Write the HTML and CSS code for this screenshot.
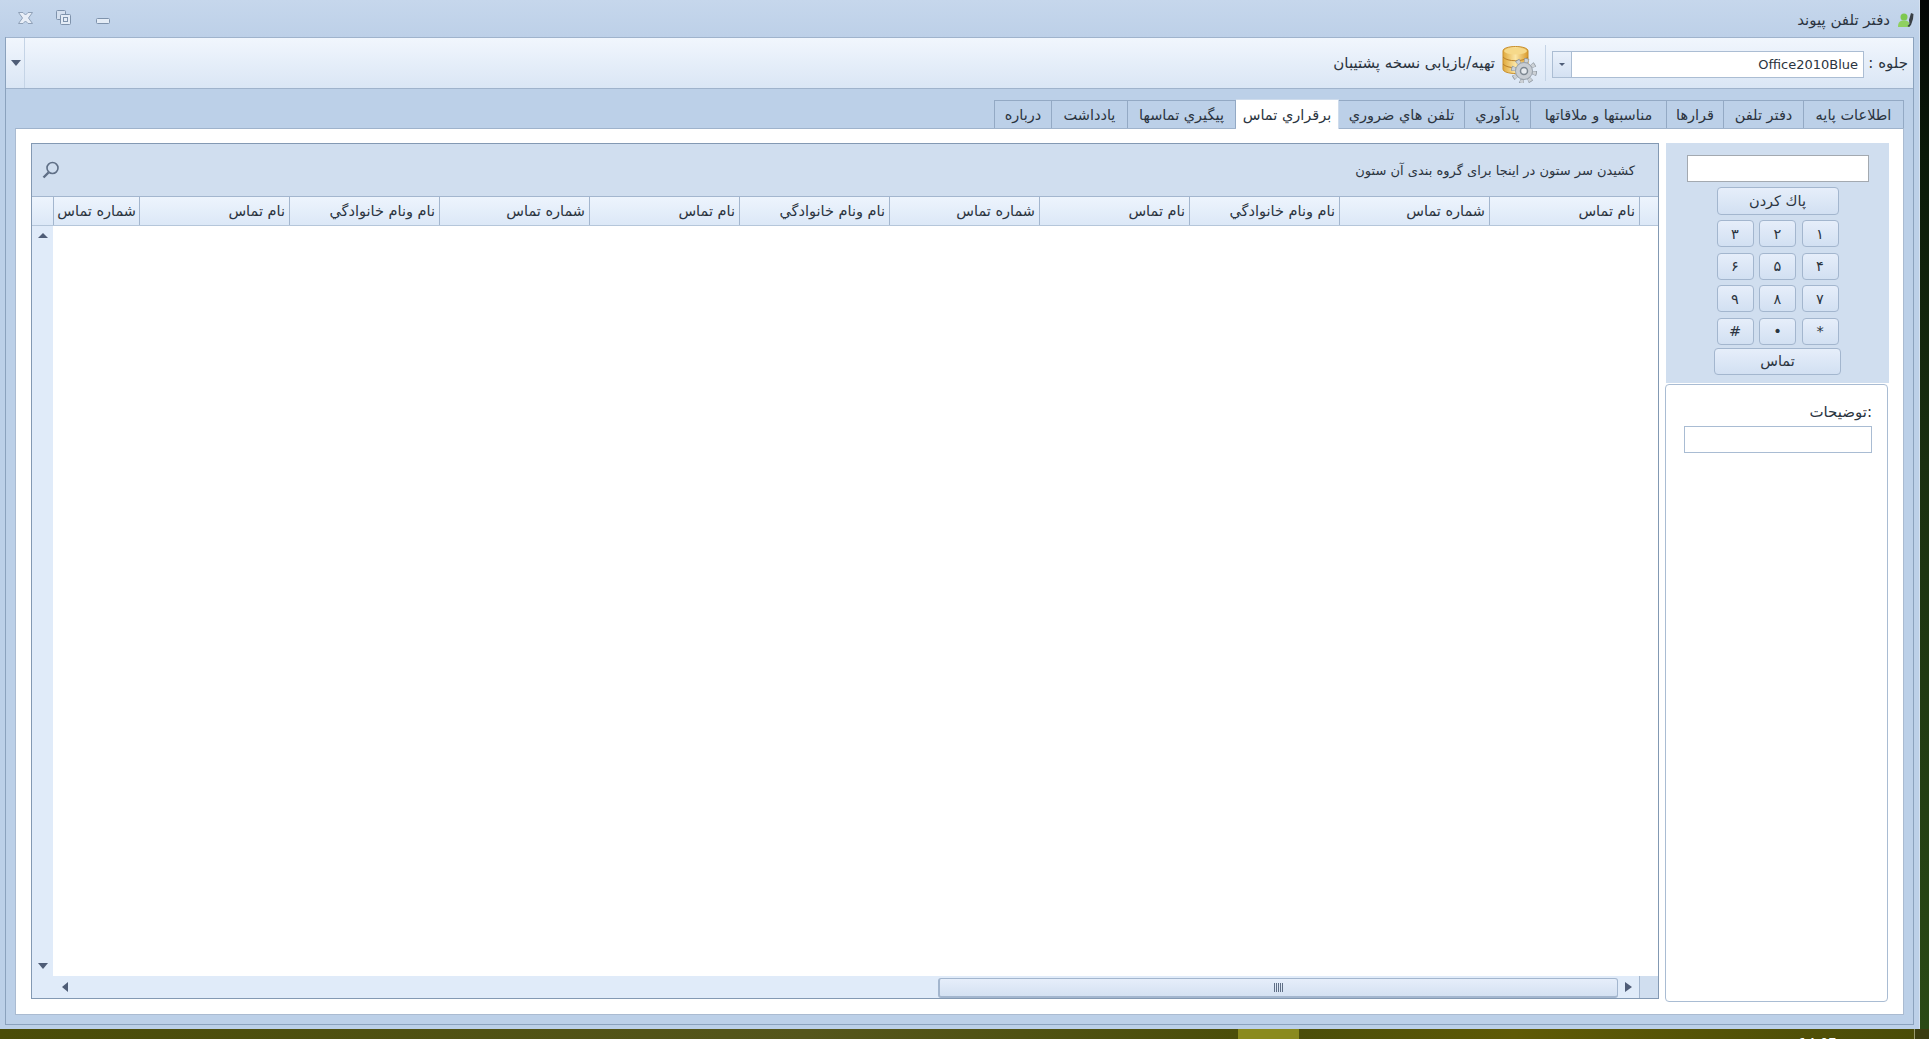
FILE: index.html
```html
<!DOCTYPE html>
<html lang="fa">
<head>
    <meta charset="UTF-8">
    <title>دفتر تلفن پیوند</title>
    <link rel="stylesheet" href="styles.css">
</head>
<body>
    <div class="screen">
        <div class="window">
            <div class="titlebar">
                <div class="window-controls">
                    <svg class="ctl ctl-close" width="15" height="12" viewBox="0 0 15 12"><path d="M.5 .5h4.500l2.500 2.500 2.500-2.500h4.500l-4 5.500 4 5.500h-4.500l-2.500-2.500-2.500 2.500H.5l4-5.500z" fill="#e8eef7" stroke="#8fa1b8"/></svg>
                    <svg class="ctl ctl-restore" width="15" height="15" viewBox="0 0 15 15"><rect x="0.5" y="0.5" width="9" height="9" rx="1" fill="#d5e0ef" stroke="#7f93ac"/><rect x="4.5" y="4.500" width="10" height="10" rx="1" fill="#e4ecf6" stroke="#7f93ac"/><rect x="7.5" y="7.5" width="4" height="4" fill="none" stroke="#7f93ac"/></svg>
                    <svg class="ctl ctl-min" width="14" height="6" viewBox="0 0 14 6"><rect x="0.5" y="0.5" width="13" height="5" rx="1" fill="#e4ecf6" stroke="#7f93ac"/></svg>
                </div>
                <div class="title">
                    <svg width="16" height="16" viewBox="0 0 16 16"><circle cx="6" cy="5" r="3.500" fill="#7ec850"/><path d="M0 15c0-5 2-6.500 6-6.500s6 1.500 6 6.500z" fill="#8fd060"/><path d="M11 8l2-7 2.500 1-.5 5-2 6-2 2-1.500-1 2-2z" fill="#3a4046"/></svg>
                    <span>دفتر تلفن پیوند</span>
                </div>
            </div>

            <div class="frame">
                <div class="toolbar">
                    <div class="toolbar-drop"><i class="arrow-down"></i></div>
                    <div class="toolbar-items">
                        <span class="skin-label">جلوه :</span>
                        <div class="combo">
                            <span class="combo-value">Office2010Blue</span>
                            <span class="combo-btn"><i class="arrow-down small"></i></span>
                        </div>
                        <div class="toolbar-sep"></div>
                        <svg class="backup-icon" width="36" height="38" viewBox="0 0 36 38">
                            <defs>
                                <linearGradient id="gold" x1="0" x2="1" y1="0" y2="0">
                                    <stop offset="0" stop-color="#e0a93c"/>
                                    <stop offset="0.5" stop-color="#fbe6a6"/>
                                    <stop offset="1" stop-color="#d99a2b"/>
                                </linearGradient>
                            </defs>
                            <path d="M2 6c0-6 25-6 25 0v18c0 6-25 6-25 0z" fill="url(#gold)" stroke="#c98f2c"/>
                            <ellipse cx="14.500" cy="6" rx="11.500" ry="3.500" fill="#f6d98a"/>
                            <path d="M2 12c4 5 21 5 25 0M2 19c4 5 21 5 25 0" fill="none" stroke="#b9802a"/>
                            <circle cx="23" cy="26" r="10.500" fill="none" stroke="#8b949d" stroke-width="5" stroke-dasharray="4.100 4.150"/>
                            <circle cx="23" cy="26" r="10.500" fill="none" stroke="#ccd1d6" stroke-width="3.400" stroke-dasharray="3.400 4.850" stroke-dashoffset="-.35"/>
                            <circle cx="23" cy="26" r="8.500" fill="#c8cdd3" stroke="#9aa3ac"/>
                            <circle cx="23" cy="26" r="3.500" fill="#e6eaee" stroke="#7d8790" stroke-width="1.500"/>
                        </svg>
                        <span class="backup-label">تهیه/بازیابی نسخه پشتیبان</span>
                    </div>
                </div>

                <div class="tabs">
                    <div class="tab tab-w100">اطلاعات پایه</div>
                    <div class="tab tab-w80">دفتر تلفن</div>
                    <div class="tab tab-w57">قرارها</div>
                    <div class="tab tab-w136">مناسبتها و ملاقاتها</div>
                    <div class="tab tab-w66">يادآوري</div>
                    <div class="tab tab-w126">تلفن هاي ضروري</div>
                    <div class="tab tab-w103 active">برقراري تماس</div>
                    <div class="tab tab-w108">پيگيري تماسها</div>
                    <div class="tab tab-w76">يادداشت</div>
                    <div class="tab tab-w58">درباره</div>
                </div>

                <div class="page">
                    <div class="side">
                        <div class="dialer">
                            <input class="dial-input" type="text">
                            <button class="btn btn-clear">پاك كردن</button>
                            <div class="keys">
                                <button class="btn">۱</button>
                                <button class="btn">۲</button>
                                <button class="btn">۳</button>
                                <button class="btn">۴</button>
                                <button class="btn">۵</button>
                                <button class="btn">۶</button>
                                <button class="btn">۷</button>
                                <button class="btn">۸</button>
                                <button class="btn">۹</button>
                                <button class="btn">*</button>
                                <button class="btn">•</button>
                                <button class="btn">#</button>
                            </div>
                            <button class="btn btn-call">تماس</button>
                        </div>
                        <div class="notes">
                            <label class="notes-label">:توضیحات</label>
                            <input class="notes-input" type="text">
                        </div>
                    </div>

                    <div class="grid">
                        <div class="group-panel">
                            <span class="group-hint">كشيدن سر ستون در اينجا برای گروه بندی آن ستون</span>
                            <svg width="20" height="20" viewBox="0 0 20 20"><circle cx="11.500" cy="8" r="5.500" fill="none" stroke="#5f6f86" stroke-width="1.600"/><path d="M7.500 12.500L2.500 17.500" stroke="#5f6f86" stroke-width="2.400"/></svg>
                        </div>
                        <div class="col-head">
                            <div class="col col-blank"></div>
                            <div class="col">نام تماس</div>
                            <div class="col">شماره تماس</div>
                            <div class="col">نام ونام خانوادگي</div>
                            <div class="col">نام تماس</div>
                            <div class="col">شماره تماس</div>
                            <div class="col">نام ونام خانوادگي</div>
                            <div class="col">نام تماس</div>
                            <div class="col">شماره تماس</div>
                            <div class="col">نام ونام خانوادگي</div>
                            <div class="col">نام تماس</div>
                            <div class="col col-last">شماره تماس</div>
                            <div class="col col-ind"></div>
                        </div>
                        <div class="grid-body">
                            <div class="rows"></div>
                            <div class="vscroll">
                                <i class="arrow-up"></i>
                                <i class="arrow-down"></i>
                            </div>
                        </div>
                        <div class="hscroll">
                            <div class="corner"></div>
                            <i class="arrow-right"></i>
                            <div class="thumb"><span class="grip"></span></div>
                            <i class="arrow-left"></i>
                        </div>
                    </div>
                </div>
            </div>
        </div>
        <div class="desktop-side"></div>
    </div>
    <div class="taskbar">
        <div class="task-fill"></div>
        <div class="task-active"></div>
        <div class="task-rest"><span class="clock">14:07</span></div>
        <div class="task-end"></div>
    </div>
</body>
</html>
```

FILE: styles.css
```css
* {
    box-sizing: border-box;
}

html, body {
    margin: 0;
    padding: 0;
    height: 100%;
    overflow: hidden;
}

body {
    font-family: "DejaVu Sans", "Noto Sans", sans-serif;
    font-size: 15px;
    color: #2b3440;
    background-color: #3c4a0c;
}

i {
    display: block;
}

.screen {
    display: flex;
    height: 1029px;
}

.window {
    width: 1920px;
    height: 1029px;
    padding: 0 5px 4px 5px;
    background-color: #bcd0e8;
    border-right: 1px solid #d5e1f0;
    display: flex;
    flex-direction: column;
}

.desktop-side {
    flex: 1;
    background: linear-gradient(#030604, #0a1a08 15%, #1a3010 45%, #2a4a15);
}

/* title bar */
.titlebar {
    height: 37px;
    flex: none;
    display: flex;
    justify-content: space-between;
    align-items: center;
    background: linear-gradient(#c6d7ec, #bdd0e8);
    margin: 0 -5px;
    padding: 0 5px 0 18px;
}

.window-controls {
    display: flex;
    align-items: center;
    padding-bottom: 1px;
}

.ctl-close {
    margin-right: 23px;
    margin-top: -1px;
}

.ctl-restore {
    margin-right: 25px;
    margin-top: -2px;
}

.ctl-min {
    margin-top: 5px;
}

.title {
    display: flex;
    align-items: center;
    direction: rtl;
    gap: 8px;
    margin-top: 3px;
}

.frame {
    flex: 1;
    min-height: 0;
    display: flex;
    flex-direction: column;
    border: 1px solid #8ba2bd;
    border-top: 0;
}

/* toolbar */
.toolbar {
    height: 52px;
    flex: none;
    display: flex;
    justify-content: space-between;
    background: linear-gradient(#f1f6fd, #dae6f5);
    border-top: 1px solid #9fb3cc;
    border-bottom: 1px solid #9fb3cc;
}

.toolbar-drop {
    width: 18px;
    margin-left: 1px;
    border-right: 1px solid #c5d4e6;
    display: flex;
    align-items: center;
    justify-content: center;
}

.toolbar-items {
    display: flex;
    direction: rtl;
    align-items: center;
    padding-right: 5px;
}

.skin-label {
    width: 44px;
    white-space: nowrap;
}

.combo {
    width: 312px;
    height: 27px;
    margin-top: 2px;
    display: flex;
    direction: rtl;
}

.combo-value {
    width: 293px;
    height: 27px;
    line-height: 26px;
    padding-right: 5px;
    background-color: #fff;
    border: 1px solid #abbdd3;
    font-size: 13px;
}

.combo-btn {
    width: 19px;
    height: 27px;
    display: flex;
    align-items: center;
    justify-content: center;
    background: linear-gradient(#eaf1fb, #d4e1f2);
    border: 1px solid #abbdd3;
    border-right: 0;
}

.toolbar-sep {
    width: 1px;
    height: 36px;
    margin: 0 6px 0 8px;
    background-color: #c5d4e6;
}

.backup-icon {
    margin-top: 2px;
}

.backup-label {
    margin-right: 6px;
}

/* tabs */
.tabs {
    height: 39px;
    flex: none;
    display: flex;
    direction: rtl;
    align-items: flex-end;
    padding-right: 9px;
}

.tab {
    height: 28px;
    text-align: center;
    line-height: 29px;
    font-size: 14.5px;
    white-space: nowrap;
    background-color: #bcd0e8;
    border: 1px solid #93a9c4;
    border-bottom: 0;
    border-left: 0;
}

.tab:last-child {
    border-left: 1px solid #93a9c4;
}

.tab.active {
    position: relative;
    height: 30px;
    margin-bottom: -1px;
    line-height: 31px;
    background-color: #fff;
    border-color: #cfdcec;
}

.tab-w100 { width: 100px; }
.tab-w80 { width: 80px; }
.tab-w57 { width: 57px; }
.tab-w136 { width: 136px; }
.tab-w66 { width: 66px; }
.tab-w126 { width: 126px; }
.tab-w103 { width: 103px; }
.tab-w108 { width: 108px; }
.tab-w76 { width: 76px; }
.tab-w58 { width: 58px; }

/* page area */
.page {
    flex: 1;
    min-height: 0;
    margin: 0 9px 9px 9px;
    padding: 14px 14px 15px 15px;
    background-color: #fff;
    border-top: 1px solid #9fb3cc;
    border-bottom: 1px solid #aabbd1;
    border-left: 1px solid #aabbd1;
    border-right: 1px solid #aabbd1;
    display: flex;
    direction: rtl;
    gap: 7px;
}

.side {
    width: 223px;
    flex: none;
    display: flex;
    flex-direction: column;
}

.dialer {
    height: 240px;
    flex: none;
    padding-top: 12px;
    background-color: #d0deef;
    display: flex;
    flex-direction: column;
    align-items: center;
}

.dial-input {
    width: 182px;
    height: 27px;
    border: 1px solid #a3a9b0;
    background-color: #fff;
    margin-bottom: 5px;
}

.btn {
    font-family: inherit;
    font-size: 14.5px;
    color: #2b3440;
    padding: 0;
    border: 1px solid #a3b6ce;
    border-radius: 4px;
    background: linear-gradient(#e6eefa, #d2e0f2);
}

.btn-clear {
    width: 122px;
    height: 28px;
    margin-bottom: 5px;
}

.keys {
    width: 122px;
    display: grid;
    grid-template-columns: repeat(3, 37px);
    grid-auto-rows: 27px;
    justify-content: space-between;
    row-gap: 5.5px;
}

.btn-call {
    width: 127px;
    height: 27px;
    margin-top: 3px;
}

.notes {
    flex: 1;
    margin: 1px 1px -3px -1px;
    padding: 18px 15px 0 16px;
    background-color: #fff;
    border: 1px solid #a9bcd3;
    border-radius: 4px;
}

.notes-label {
    display: block;
    height: 23px;
    line-height: 18px;
}

.notes-input {
    display: block;
    width: 188px;
    height: 27px;
    border: 1px solid #a9bcd3;
    background-color: #fff;
}

/* data grid */
.grid {
    flex: 1;
    min-width: 0;
    display: flex;
    flex-direction: column;
    border: 1px solid #8399b3;
}

.group-panel {
    height: 52px;
    flex: none;
    display: flex;
    justify-content: space-between;
    align-items: center;
    padding: 0 23px 0 9px;
    background-color: #d0deef;
}

.group-hint {
    font-size: 13px;
}

.col-head {
    height: 30px;
    flex: none;
    display: flex;
    background: linear-gradient(#edf4fd, #dce8f7);
    border-top: 1px solid #a3b6ce;
    border-bottom: 1px solid #b5c6da;
}

.col {
    width: 150px;
    flex: none;
    line-height: 29px;
    padding-right: 4px;
    font-size: 14.5px;
    white-space: nowrap;
    border-left: 1px solid #a3b6ce;
}

.col-blank {
    width: 19px;
}

.col-last {
    width: 86px;
    padding-right: 3px;
}

.col-ind {
    width: 21px;
    border-left: 0;
}

.grid-body {
    flex: 1;
    min-height: 0;
    display: flex;
}

.rows {
    flex: 1;
    background-color: #fff;
}

.vscroll {
    width: 21px;
    flex: none;
    padding: 7px 0 7px;
    display: flex;
    flex-direction: column;
    justify-content: space-between;
    align-items: center;
    background-color: #e0ebf9;
}

.hscroll {
    height: 22px;
    flex: none;
    display: flex;
    align-items: center;
    background-color: #e0ebf9;
}

.corner {
    width: 19px;
    height: 100%;
    background-color: #d0deef;
    border-left: 1px solid #a3b6ce;
    flex: none;
}

.thumb {
    width: 680px;
    height: 20px;
    margin-top: 1px;
    border: 1px solid #a3b6ce;
    border-bottom-width: 2px;
    border-left-width: 2px;
    border-radius: 3px;
    background: linear-gradient(#e6eefa, #d4e1f2);
    display: flex;
    align-items: center;
    justify-content: center;
    flex: none;
}

.grip {
    width: 9px;
    height: 9px;
    background: repeating-linear-gradient(90deg, #5f6f86 0 1px, transparent 1px 2px);
}

/* arrows */
.arrow-down,
.arrow-up,
.arrow-left,
.arrow-right {
    width: 0;
    height: 0;
    flex: none;
    border-style: solid;
    border-color: transparent;
}

.arrow-down {
    border-width: 6px 5.5px 0 5.5px;
    border-top-color: #4f5d77;
}

.arrow-down.small {
    border-width: 3.5px 3.5px 0 3.5px;
}

.arrow-up {
    border-width: 0 5.5px 5px 5.5px;
    border-bottom-color: #4f5d77;
}

.arrow-right {
    border-width: 5px 0 5px 7px;
    border-left-color: #4f5d77;
    margin: 0 7px;
}

.arrow-left {
    border-width: 5px 6px 5px 0;
    border-right-color: #4f5d77;
    margin-right: 870px;
}

/* desktop behind the window */
.taskbar {
    height: 10px;
    display: flex;
    overflow: hidden;
}

.task-fill {
    width: 1238px;
    background: linear-gradient(90deg, #4a4c08, #55561c 65%, #4b4e0a);
}

.task-active {
    width: 61px;
    background-color: #8a8a1e;
}

.task-rest {
    flex: 1;
    padding-left: 500px;
    padding-top: 6px;
    background: linear-gradient(90deg, #4b4e0a, #5f5a06 35%, #4a4c08);
}

.clock {
    display: block;
    color: #fff;
    font-size: 13px;
    line-height: 16px;
    white-space: nowrap;
}

.task-end {
    width: 15px;
    flex: none;
    background-color: #3b3d10;
    border-left: 1px solid #9a9a70;
}
```
